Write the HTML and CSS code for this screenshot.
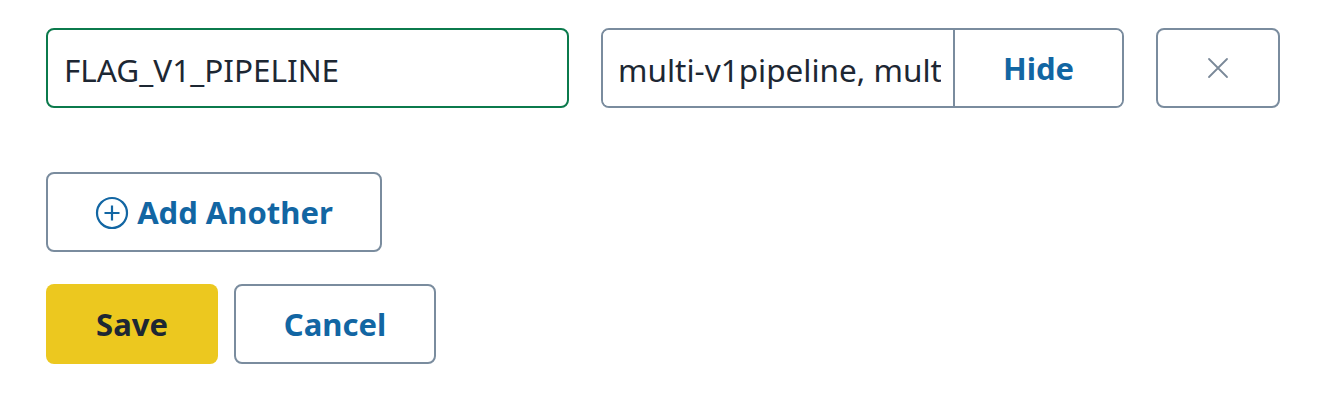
FILE: index.html
```html
<!DOCTYPE html>
<html lang="en">
<head>
<meta charset="utf-8">
<title>Flag form</title>
<link rel="stylesheet" href="styles.css">
</head>
<body>
<form class="form">
  <div class="row">
    <input class="field field--active" type="text" value="FLAG_V1_PIPELINE">
    <div class="group">
      <input class="group__input" type="text" value="multi-v1pipeline, multi-v2pipeline">
      <button type="button" class="group__btn">Hide</button>
    </div>
    <button type="button" class="close" aria-label="Remove">
      <svg width="22" height="22" viewBox="0 0 22 22" aria-hidden="true"><path d="M2 2 L20 20 M20 2 L2 20" stroke="#7a8898" stroke-width="1.8" fill="none" stroke-linecap="round"/></svg>
    </button>
  </div>
  <div class="add-row">
    <button type="button" class="btn btn--outline btn--add">
      <svg class="plus" width="34" height="34" viewBox="0 0 34 34" aria-hidden="true"><circle cx="17" cy="17" r="15" stroke="#1266a3" stroke-width="2.2" fill="none"/><path d="M17 9.5 V24.5 M9.5 17 H24.5" stroke="#1266a3" stroke-width="2.2"/></svg>
      <span>Add Another</span>
    </button>
  </div>
  <div class="actions">
    <button type="button" class="btn btn--primary">Save</button>
    <button type="button" class="btn btn--outline btn--cancel">Cancel</button>
  </div>
</form>
</body>
</html>
```

FILE: styles.css
```css
* { box-sizing: border-box; }
html, body { margin: 0; background: #ffffff; }
body {
  font-family: "Noto Sans", "Open Sans", sans-serif;
  padding: 28px 42px 0 46px;
  color: #1d2733;
}
.form { display: flex; flex-direction: column; }
.row { display: flex; gap: 32px; }
.field {
  width: 523px;
  height: 80px;
  border: 2px solid #0b7a4c;
  border-radius: 8px;
  padding: 2px 16px 0 16px;
  font: 400 31.5px "Noto Sans", sans-serif;
  color: #1d2733;
  outline: none;
  background: #fff;
}
.group {
  width: 523px;
  height: 80px;
  display: flex;
  border: 2px solid #7a8c9e;
  border-radius: 8px;
  overflow: hidden;
}
.group__input {
  flex: 1;
  min-width: 0;
  border: none;
  border-right: 2px solid #7a8c9e;
  padding: 2px 12px 0 15px;
  font: 400 31.5px "Noto Sans", sans-serif;
  color: #1d2733;
  outline: none;
  background: #fff;
}
.group__btn {
  width: 167px;
  flex: none;
  border: none;
  background: #fff;
  font: 700 31px "Noto Sans", sans-serif;
  color: #1266a3;
  padding: 0;
}
.close {
  width: 124px;
  height: 80px;
  border: 2px solid #7a8c9e;
  border-radius: 8px;
  background: #fff;
  display: flex;
  align-items: center;
  justify-content: center;
  padding: 0;
}
.add-row { margin-top: 64px; display: flex; }
.btn {
  height: 80px;
  border-radius: 8px;
  font: 700 31px "Noto Sans", sans-serif;
  display: inline-flex;
  align-items: center;
  justify-content: center;
  padding: 0;
}
.btn--outline { border: 2px solid #7a8c9e; background: #fff; color: #1266a3; }
.btn--add { width: 336px; gap: 8px; }
.plus { display: block; margin-top: 1px; }
.actions { margin-top: 32px; display: flex; gap: 16px; }
.btn--primary { width: 172px; border: none; background: #ecc81f; color: #1d2733; }
.btn--cancel { width: 202px; }
```
